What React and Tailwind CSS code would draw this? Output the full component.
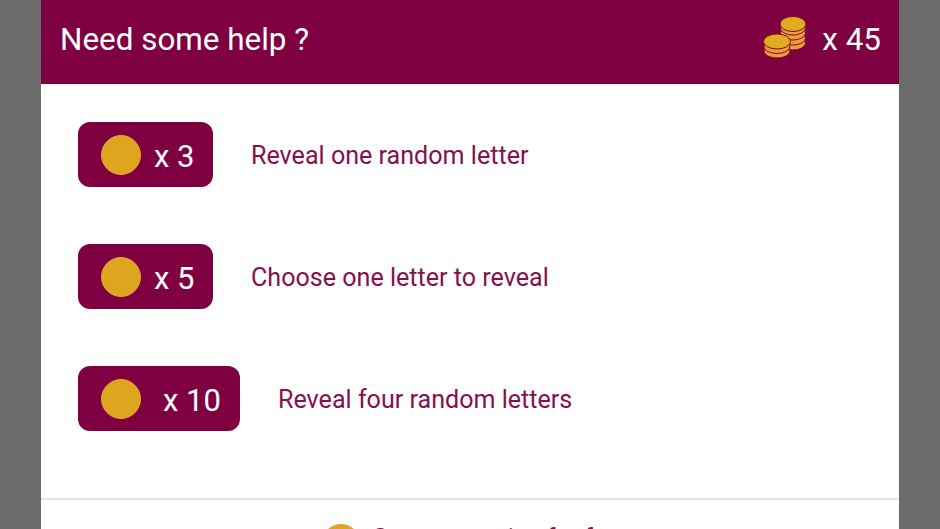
import React from 'react';

const Coin = ({ className }) => (
  <div className={`rounded-full bg-[#dea61f] border border-[#e8a23a] ${className}`} />
);

const CoinStacks = () => (
  <svg width="44" height="44" viewBox="0 0 44 44" className="mb-[10px]">
    <g stroke="#7d0a30" strokeWidth="1">
      <ellipse cx="30" cy="28" rx="12.5" ry="7" fill="#eb9d3a" />
      <ellipse cx="30" cy="23" rx="12.5" ry="7" fill="#eb9d3a" />
      <ellipse cx="30" cy="18" rx="12.5" ry="7" fill="#eb9d3a" />
      <ellipse cx="30" cy="13" rx="12.5" ry="7" fill="#eb9d3a" />
      <ellipse cx="30" cy="9" rx="13" ry="7.5" fill="#e2aa1f" />
      <ellipse cx="14" cy="36" rx="13" ry="7" fill="#eb9d3a" />
      <ellipse cx="14" cy="31.5" rx="13" ry="7" fill="#eb9d3a" />
      <ellipse cx="14" cy="26.5" rx="13.5" ry="7.5" fill="#e2aa1f" />
    </g>
  </svg>
);

const HelpOption = ({ cost, label, badgeClass }) => (
  <div className="flex items-center">
    <div className={`flex items-center h-[65px] rounded-xl bg-[#7f0040] pl-[23px] mr-[38px] ${badgeClass}`}>
      <Coin className="w-10 h-10 shrink-0" />
      <span className="text-[31px] text-white pt-[5px]">x {cost}</span>
    </div>
    <span className="text-[25.1px] text-[#85104c] pt-[3px]">{label}</span>
  </div>
);

export default function App() {
  return (
    <div className="h-[529px] overflow-hidden bg-[#6b6b6b] pl-[40.5px] font-['Roboto',sans-serif]">
      <div className="w-[858.5px] bg-white h-[600px]">
        <div className="flex items-center justify-between h-[84px] bg-[#7f0040] pl-[19.5px] pr-[18px] text-white text-[31.4px]">
          <span className="pb-[5px]">Need some help ?</span>
          <div className="flex items-center gap-[15px]">
            <CoinStacks />
            <span className="pb-[5px]">x 45</span>
          </div>
        </div>

        <div className="flex flex-col gap-[57px] pl-[37.5px] pt-[38px] pb-[67px]">
          <HelpOption cost={3} label="Reveal one random letter" badgeClass="w-[135px] gap-[13px]" />
          <HelpOption cost={5} label="Choose one letter to reveal" badgeClass="w-[135px] gap-[13px]" />
          <HelpOption cost={10} label="Reveal four random letters" badgeClass="w-[162px] gap-[22px]" />
        </div>

        <div className="border-t-2 border-[#e4e4e4] flex justify-center items-start gap-[11px] pt-6 pl-[9px]">
          <Coin className="w-10 h-10" />
          <span className="text-[25px] text-[#85104c] -mt-[4px]">Get more coins for free</span>
        </div>
      </div>
    </div>
  );
}
